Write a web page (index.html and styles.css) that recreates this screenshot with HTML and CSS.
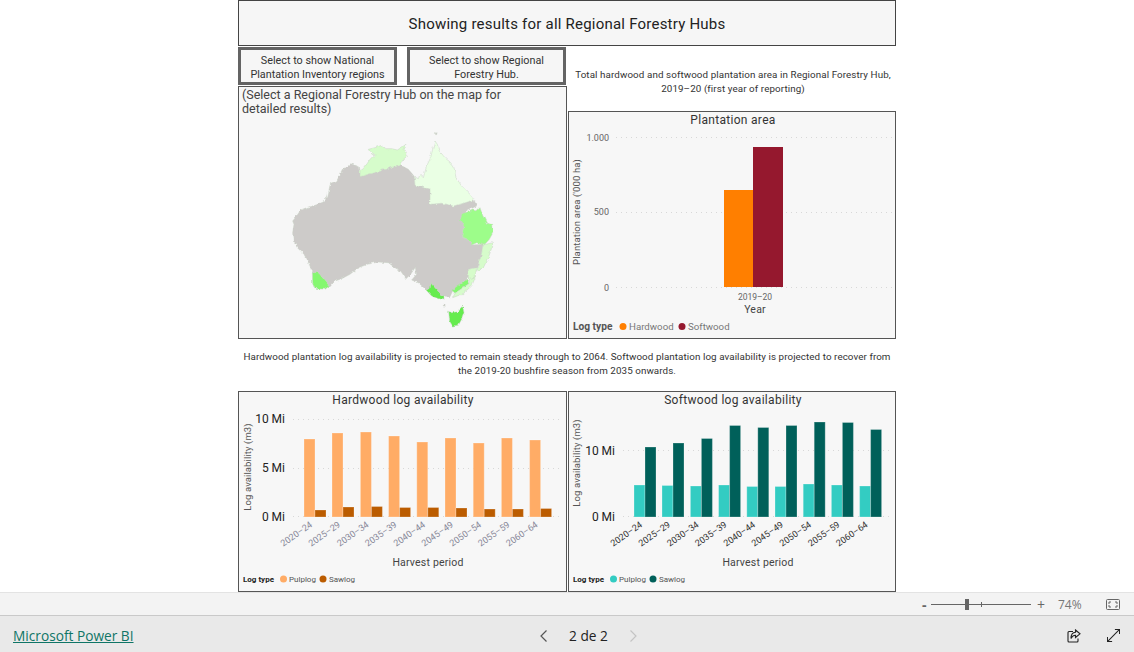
FILE: index.html
```html
<!DOCTYPE html>
<html lang="en">
<head>
<meta charset="utf-8">
<title>Regional Forestry Hubs</title>
<link rel="stylesheet" href="styles.css">
</head>
<body>
<div class="app">
  <main class="viewport">
    <div class="report">
      <h1 class="banner">Showing results for all Regional Forestry Hubs</h1>
      <div class="upper">
        <div class="left-col">
          <div class="buttons">
            <button class="toggle">Select to show National Plantation Inventory regions</button>
            <button class="toggle">Select to show Regional Forestry Hub.</button>
          </div>
          <section class="map-card">
            <p class="map-note">(Select a Regional Forestry Hub on the map for detailed results)</p>
            <svg class="map" viewBox="0 0 690 630" width="230" height="210" aria-label="Map of Australia">
              <defs>
                <filter id="rough" x="-5%" y="-5%" width="110%" height="110%">
                  <feTurbulence type="fractalNoise" baseFrequency=".07" numOctaves="3" seed="4"/>
                  <feDisplacementMap in="SourceGraphic" scale="11" xChannelSelector="R" yChannelSelector="G"/>
                  <feGaussianBlur stdDeviation="1.200"/>
                </filter>
              </defs>
              <g class="map-shapes">
                <path class="land" d="M40 345L38 320 42 295 38 285 50 270 62 252 85 243 108 237 130 228 142 215 148 190 152 172 170 165 178 150 190 128 205 120 212 113 225 118 238 122 243 150 300 135 330 125 362 118 385 130 402 150 405 178 450 190 450 235 485 232 520 240 550 232 582 222 590 240 560 255 545 275 552 302 545 332 560 338 575 357 610 355 604 385 598 405 590 425 565 430 565 455 540 475 520 490 510 512 492 510 478 500 465 485 453 472 450 488 438 492 432 485 415 470 395 462 410 445 405 425 392 445 378 458 362 435 345 425 325 410 295 408 262 415 235 425 210 445 185 458 165 465 150 482 130 458 115 440 97 440 88 415 72 385 52 365Z"/>
                <path class="pale" d="M240 152L240 135 250 128 262 112 270 100 285 85 270 78 265 70 285 65 305 58 318 68 335 68 352 72 368 62 378 55 372 72 382 92 368 105 362 118 330 125 300 135Z"/>
                <path class="paler" d="M403 152L415 158 420 145 430 155 440 120 452 95 458 70 465 45 472 55 478 75 495 95 512 110 522 125 528 155 545 180 560 195 575 210 582 222 550 232 520 240 485 232 450 235 450 190 405 178Z"/>
                <path class="mid" d="M540 282L548 262 565 258 578 252 590 255 600 245 608 268 620 292 635 295 638 322 628 340 612 358 590 350 575 357 560 338 545 332 552 302Z"/>
                <path class="pale" d="M610 357L637 350 632 375 625 395 610 425 590 435 598 405 604 385Z"/>
                <path class="pale" d="M565 430L590 425 585 455 565 460Z"/>
                <path class="soft" d="M515 492L560 460 567 473 525 502Z"/>
                <path class="pale" d="M518 515L525 502 567 473 565 458 587 452 575 480 545 505Z"/>
                <path class="strong" d="M438 492L450 488 453 472 465 485 478 500 492 510 492 522 475 518 455 510Z"/>
                <path class="soft" d="M97 440L115 440 130 458 148 480 135 490 105 487 98 470Z"/>
                <path class="strong" d="M503 555L515 560 530 558 548 540 552 560 545 580 535 598 518 600 505 580Z"/>
                <path class="island" d="M490 535l5 1 0 7-5 0ZM466 20l5 1-1 5-4-1Z"/>
              </g>
            </svg>
          </section>
        </div>
        <div class="right-col">
          <p class="caption caption-top">Total hardwood and softwood plantation area in Regional Forestry Hub, 2019–20 (first year of reporting)</p>
          <section class="chart-card plantation">
            <svg class="chart" viewBox="569 112 326 226">
              <text class="chart-title" x="733" y="124">Plantation area</text>
              <line class="grid" x1="616" x2="893" y1="137.5" y2="137.5"/>
              <line class="grid" x1="616" x2="893" y1="212.5" y2="212.5"/>
              <line class="grid" x1="616" x2="893" y1="287.5" y2="287.5"/>
              <text class="tick end" x="609" y="140.500">1.000</text>
              <text class="tick end" x="609" y="215">500</text>
              <text class="tick end" x="609" y="290.500">0</text>
              <text class="axis-v" transform="translate(580 212) rotate(-90)">Plantation area ('000 ha)</text>
              <rect class="hardwood" x="724" y="190" width="29" height="97"/>
              <rect class="softwood" x="753" y="147" width="30" height="140"/>
              <text class="tick tick-x mid-a" x="755" y="299.500">2019–20</text>
              <text class="axis-h" x="755" y="313">Year</text>
              <text class="legend-title" x="573" y="330">Log type</text>
              <circle class="hardwood" cx="623" cy="326.500" r="3.500"/>
              <text class="legend" x="629" y="330">Hardwood</text>
              <circle class="softwood" cx="682" cy="326.500" r="3.500"/>
              <text class="legend" x="688" y="330">Softwood</text>
            </svg>
          </section>
        </div>
      </div>
      <p class="caption caption-mid">Hardwood plantation log availability is projected to remain steady through to 2064. Softwood plantation log availability is projected to recover from the 2019-20 bushfire season from 2035 onwards.</p>
      <div class="lower">
        <section class="chart-card">
          <svg class="chart" viewBox="239 392 327 199">
            <text class="chart-title" x="403" y="403.500">Hardwood log availability</text>
            <line class="grid" x1="293" x2="561" y1="419.500" y2="419.500"/>
            <line class="grid" x1="293" x2="561" y1="468.500" y2="468.500"/>
            <line class="grid" x1="293" x2="561" y1="516.500" y2="516.500"/>
            <text class="tick-lg end" x="285" y="423">10 Mi</text>
            <text class="tick-lg end" x="285" y="472">5 Mi</text>
            <text class="tick-lg end" x="285" y="521">0 Mi</text>
            <text class="axis-v" transform="translate(251 467) rotate(-90)">Log availability (m3)</text>
            <g class="pulp-h">
              <rect x="304" y="439" width="11" height="78"/>
              <rect x="332" y="433" width="11" height="84"/>
              <rect x="360.400" y="432" width="11" height="85"/>
              <rect x="388.600" y="436" width="11" height="81"/>
              <rect x="416.800" y="442" width="11" height="75"/>
              <rect x="445" y="438" width="11" height="79"/>
              <rect x="473.200" y="443" width="11" height="74"/>
              <rect x="501.400" y="438" width="11" height="79"/>
              <rect x="529.600" y="440" width="11" height="77"/>
            </g>
            <g class="saw-h">
              <rect x="315" y="510" width="11" height="7"/>
              <rect x="343" y="507" width="11" height="10"/>
              <rect x="371.400" y="506.500" width="11" height="10.500"/>
              <rect x="399.600" y="507.500" width="11" height="9.500"/>
              <rect x="427.800" y="507.500" width="11" height="9.500"/>
              <rect x="456" y="508" width="11" height="9"/>
              <rect x="484.200" y="509" width="11" height="8"/>
              <rect x="512.400" y="509" width="11" height="8"/>
              <rect x="540.600" y="508.500" width="11" height="8.500"/>
            </g>
            <g class="period period-faint">
              <text transform="translate(313 526) rotate(-35)">2020–24</text>
              <text transform="translate(341 526) rotate(-35)">2025–29</text>
              <text transform="translate(369.500 526) rotate(-35)">2030–34</text>
              <text transform="translate(397.500 526) rotate(-35)">2035–39</text>
              <text transform="translate(426 526) rotate(-35)">2040–44</text>
              <text transform="translate(454 526) rotate(-35)">2045–49</text>
              <text transform="translate(482 526) rotate(-35)">2050–54</text>
              <text transform="translate(510.500 526) rotate(-35)">2055–59</text>
              <text transform="translate(538.500 526) rotate(-35)">2060–64</text>
            </g>
            <text class="axis-h" x="428" y="566">Harvest period</text>
            <text class="legend-title small" x="243" y="582">Log type</text>
            <circle class="pulp-h" cx="283.500" cy="579" r="3.500"/>
            <text class="legend small" x="289" y="582">Pulplog</text>
            <circle class="saw-h" cx="323" cy="579" r="3.500"/>
            <text class="legend small" x="329" y="582">Sawlog</text>
          </svg>
        </section>
        <section class="chart-card">
          <svg class="chart" viewBox="569 392 326 199">
            <text class="chart-title" x="733" y="403.500">Softwood log availability</text>
            <line class="grid" x1="623" x2="891" y1="450.500" y2="450.500"/>
            <line class="grid" x1="623" x2="891" y1="516.500" y2="516.500"/>
            <text class="tick-lg end" x="615" y="455">10 Mi</text>
            <text class="tick-lg end" x="615" y="521">0 Mi</text>
            <text class="axis-v" transform="translate(580 463) rotate(-90)">Log availability (m3)</text>
            <g class="pulp-s">
              <rect x="634" y="485" width="11" height="32"/>
              <rect x="662" y="485.500" width="11" height="31.500"/>
              <rect x="690.400" y="486" width="11" height="31"/>
              <rect x="718.600" y="485" width="11" height="32"/>
              <rect x="746.800" y="486.500" width="11" height="30.500"/>
              <rect x="775" y="486.500" width="11" height="30.500"/>
              <rect x="803.200" y="484" width="11" height="33"/>
              <rect x="831.400" y="485" width="11" height="32"/>
              <rect x="859.600" y="486" width="11" height="31"/>
            </g>
            <g class="saw-s">
              <rect x="645" y="447" width="11" height="70"/>
              <rect x="673" y="443" width="11" height="74"/>
              <rect x="701.400" y="438.500" width="11" height="78.500"/>
              <rect x="729.600" y="425.500" width="11" height="91.500"/>
              <rect x="757.800" y="427.500" width="11" height="89.500"/>
              <rect x="786" y="425.500" width="11" height="91.500"/>
              <rect x="814.200" y="422" width="11" height="95"/>
              <rect x="842.400" y="422.500" width="11" height="94.500"/>
              <rect x="870.600" y="429.500" width="11" height="87.500"/>
            </g>
            <g class="period">
              <text transform="translate(643 526) rotate(-35)">2020–24</text>
              <text transform="translate(671 526) rotate(-35)">2025–29</text>
              <text transform="translate(699.500 526) rotate(-35)">2030–34</text>
              <text transform="translate(727.500 526) rotate(-35)">2035–39</text>
              <text transform="translate(756 526) rotate(-35)">2040–44</text>
              <text transform="translate(784 526) rotate(-35)">2045–49</text>
              <text transform="translate(812 526) rotate(-35)">2050–54</text>
              <text transform="translate(840.500 526) rotate(-35)">2055–59</text>
              <text transform="translate(868.500 526) rotate(-35)">2060–64</text>
            </g>
            <text class="axis-h" x="758" y="566">Harvest period</text>
            <text class="legend-title small" x="573" y="582">Log type</text>
            <circle class="pulp-s" cx="613.500" cy="579" r="3.500"/>
            <text class="legend small" x="619" y="582">Pulplog</text>
            <circle class="saw-s" cx="653" cy="579" r="3.500"/>
            <text class="legend small" x="659" y="582">Sawlog</text>
          </svg>
        </section>
      </div>
    </div>
  </main>
  <div class="zoombar">
    <span class="zoom-sign">-</span>
    <div class="slider"><span class="slider-tick"></span><span class="slider-thumb"></span></div>
    <span class="zoom-sign plus">+</span>
    <span class="zoom-value">74%</span>
    <svg class="fit-icon" viewBox="0 0 14 11" width="14" height="11"><path d="M1.500 .5H12.500Q13.500 .5 13.500 1.500V9.500Q13.500 10.500 12.500 10.500H1.500Q.5 10.500 .5 9.500V1.500Q.5 .5 1.500 .5Z"/><path d="M3 5V3H5M9 3H11V5M11 6V8H9M5 8H3V6"/></svg>
  </div>
  <footer class="footer">
    <a class="brand" href="#">Microsoft Power BI</a>
    <nav class="pager">
      <svg class="chev" viewBox="0 0 8 12" width="8" height="12"><path d="M6.500 .5L1 6l5.500 5.500"/></svg>
      <span class="page-label">2 de 2</span>
      <svg class="chev off" viewBox="0 0 8 12" width="8" height="12"><path d="M1.500 .5L7 6l-5.500 5.500"/></svg>
    </nav>
    <div class="foot-icons">
      <svg class="foot-icon" viewBox="0 0 14 14" width="14" height="14"><path d="M6 2.500H2Q1 2.500 1 3.500V12Q1 13 2 13H10Q11 13 11 12V9.500"/><path d="M8.500 1L13 4.800 8.500 8.500V6.300C6 6.300 4.800 7.500 4 9.500 4 6 5.500 3.500 8.500 3.300Z"/></svg>
      <svg class="foot-icon" viewBox="0 0 14 14" width="13" height="13"><path d="M8.500 .5H13.500V5.500M13.500 .5L.5 13.500M.5 8.500V13.500H5.500"/></svg>
    </div>
  </footer>
</div>
</body>
</html>
```

FILE: styles.css
```css
* { box-sizing: border-box; }
html, body { margin: 0; height: 100%; background: #fff; }
body { font-family: Roboto, "Liberation Sans", sans-serif; overflow: hidden; }

.app { display: flex; flex-direction: column; height: 652px; }
.viewport { height: 592px; overflow: hidden; flex: none; }
.report { width: 658px; margin: 0 auto; }

.banner {
  height: 46px; margin: 0 0 1px; padding-top: 2px; border: 1px solid #444;
  background: #f6f6f6; color: #222; font-size: 15px; font-weight: 400; letter-spacing: .22px;
  display: flex; align-items: center; justify-content: center;
}

.upper { display: grid; grid-template-columns: 329px 328px; column-gap: 1px; }
.left-col { display: flex; flex-direction: column; }
.buttons { display: flex; gap: 10px; height: 39px; }
.toggle {
  width: 159px; height: 38px; padding: 3px 8px 0; border: 3px solid #646464; border-radius: 0;
  background: #f6f6f6; color: #333; font: 400 10.8px/14px Roboto, sans-serif; text-align: center;
}
.map-card { height: 253px; border: 1px solid #555; background: #f7f7f7; display: flex; flex-direction: column; }
.map-note { margin: 0; padding: 1px 3px 0; width: 300px; height: 40px; color: #444; font-size: 12.5px; line-height: 14px; }
.map { display: block; margin: -1px 0 0 41px; }
.map-shapes { filter: url(#rough); }
.map-shapes path { stroke: #c9d2c4; stroke-width: 1.500; stroke-linejoin: round; }
.land { fill: #cdcbc9; }
.paler { fill: #eaffe4; }
.pale { fill: #d6fccb; }
.mid { fill: #9dfd8a; }
.soft { fill: #85f870; }
.strong { fill: #66ec50; }
.island { fill: #cdcbc9; }

.right-col { display: flex; flex-direction: column; }
.caption { margin: 0; color: #333; font-size: 9.8px; line-height: 14px; text-align: center; }
.caption-top { height: 64px; padding: 21px 4px 0 6px; letter-spacing: .1px; }
.caption-mid { height: 52px; padding: 11px 4px 0 4px; letter-spacing: .08px; }

.chart-card { background: #f7f7f7; border: 1px solid #555; }
.plantation { height: 228px; }
.lower { display: grid; grid-template-columns: 329px 328px; column-gap: 1px; height: 201px; }
.lower .chart-card { height: 201px; }
.chart { display: block; width: 100%; height: 100%; }
.chart text { font-family: Roboto, sans-serif; }

.chart-title { font-size: 12px; fill: #333; text-anchor: middle; letter-spacing: .3px; }
.grid { stroke: #d8d8d8; stroke-dasharray: 1 4; }
.tick { font-size: 9px; fill: #666; }
.tick-x { font-size: 8.500px; }
.tick-lg { font-size: 12px; fill: #222; }
.end { text-anchor: end; }
.mid-a { text-anchor: middle; }
.axis-v { font-size: 9.500px; fill: #555; text-anchor: middle; letter-spacing: .1px; }
.axis-h { font-size: 10.500px; fill: #444; text-anchor: middle; letter-spacing: .2px; }
.legend-title { font-size: 10.200px; font-weight: 700; fill: #555; }
.legend { font-size: 9.700px; fill: #777; }
.legend-title.small { font-size: 8px; fill: #222; }
.legend.small { font-size: 8px; fill: #555; }
.period text { font-size: 9px; fill: #333; text-anchor: end; }
.period-faint text { fill: #889; }

.hardwood { fill: #ff7f00; }
.softwood { fill: #95182e; }
.pulp-h { fill: #ffac66; }
.saw-h { fill: #bb5c00; }
.pulp-s { fill: #33ccc2; }
.saw-s { fill: #00605a; }
g.pulp-h rect, g.saw-h rect, g.pulp-s rect, g.saw-s rect { stroke: rgba(255,255,255,.25); stroke-width: 1; }

.zoombar {
  height: 23px; flex: none; display: flex; align-items: center; justify-content: flex-end;
  background: #f3f3f3; border-top: 1px solid #e3e3e3; padding-right: 14px; color: #777; font-size: 12px;
  font-family: "Open Sans", sans-serif;
}
.zoom-sign { font-size: 14px; width: 9px; font-weight: 700; color: #666; }
.plus { margin-left: 6px; font-weight: 400; }
.slider { position: relative; width: 100px; height: 1px; background: #666; }
.slider-tick { position: absolute; left: 50px; top: -2px; width: 1px; height: 5px; background: #666; }
.slider-thumb { position: absolute; left: 34px; top: -5px; width: 4px; height: 11px; background: #666; }
.zoom-value { margin-left: 12px; width: 30px; }
.fit-icon { margin-left: 18px; fill: none; stroke: #666; }

.footer {
  height: 37px; flex: none; display: grid; grid-template-columns: 527px auto 1fr; align-items: center;
  background: #e9e9e9; border-top: 1px solid #c9c9c9; padding: 3px 14px 0 13px;
  font-family: "Open Sans", sans-serif;
}
.brand { color: #0f7566; font-size: 13.700px; text-decoration: underline; }
.pager { display: flex; align-items: center; gap: 21px; }
.page-label { color: #222; font-size: 13.700px; }
.chev { fill: none; stroke: #555; stroke-width: 1.200; }
.chev.off { stroke: #c4c4c4; }
.foot-icons { display: flex; justify-content: flex-end; align-items: center; gap: 26px; }
.foot-icon { fill: none; stroke: #222; stroke-width: 1.100; }
```
